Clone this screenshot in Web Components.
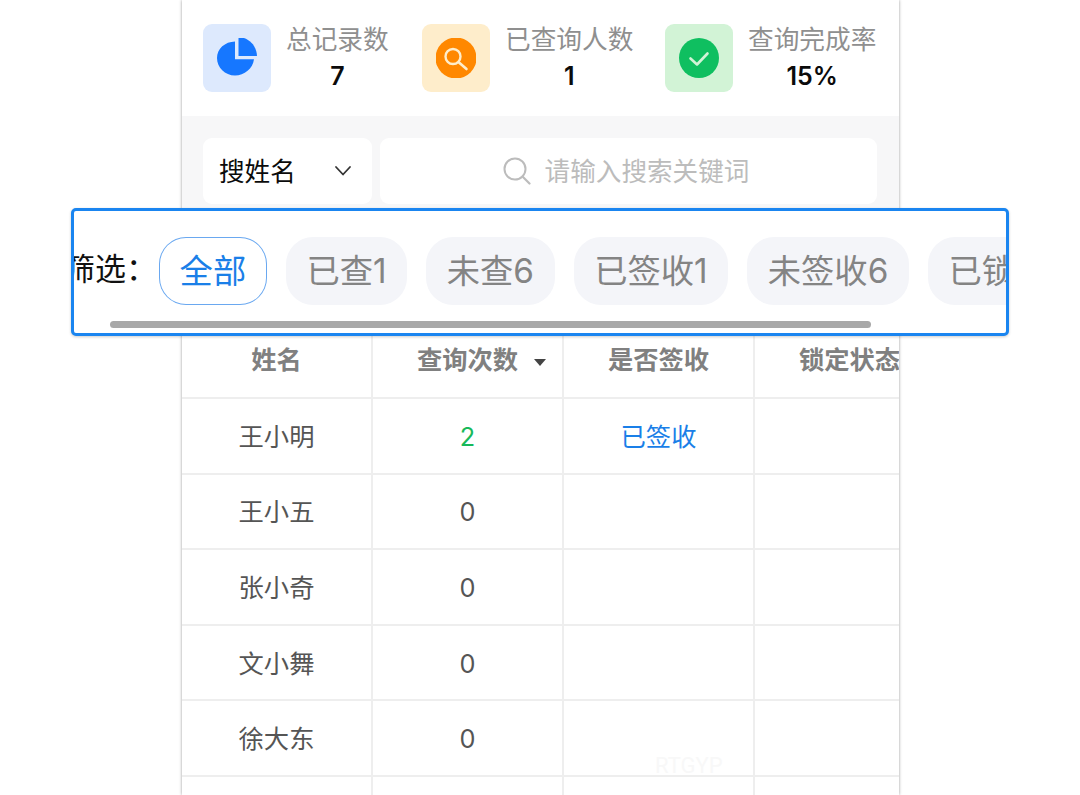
<!DOCTYPE html>
<html lang="zh">
<head>
<meta charset="utf-8">
<title>查询统计</title>
<style>
  html, body { margin:0; padding:0; height:795px; overflow:hidden; background:#fff; }
  body { font-family:"Noto Sans CJK SC","Noto Sans",sans-serif; position:relative; }
</style>
</head>
<body>
<app-shell>
  <stat-bar slot="stats">
    <stat-card label="总记录数" value="7" tone="#dde9fd" style="width:219px">
      <svg viewBox="0 1 40 40" width="40" height="40"><path d="M18 4.5V22.3H37C36 31.5 27.3 38.5 18 38.5 8 38.5 0 30.5 0 21 0 11.8 8 4.7 18 4.5Z" fill="#1677ff"/><path d="M21.5 0C31.6.4 39.6 8.4 40 19H21.5Z" fill="#1677ff"/></svg>
    </stat-card>
    <stat-card label="已查询人数" value="1" tone="#feedcb" style="width:243px">
      <svg viewBox="0 0 40 40" width="40" height="40"><circle cx="20" cy="20" r="20.5" fill="#ff8800"/><circle cx="17" cy="18.5" r="7.5" fill="none" stroke="#feedcb" stroke-width="2.4"/><path d="M23 24.5l7.5 6.5" fill="none" stroke="#feedcb" stroke-width="2.6" stroke-linecap="round"/></svg>
    </stat-card>
    <stat-card label="查询完成率" value="15%" tone="#d2f3d6" style="width:212px">
      <svg viewBox="0 0 40 40" width="40" height="40"><circle cx="20" cy="20" r="20" fill="#0fbf60"/><path d="M11.5 20.5L18 26.5 28.5 15.5" fill="none" stroke="#d2f3d6" stroke-width="2.6" stroke-linecap="round" stroke-linejoin="round"/></svg>
    </stat-card>
  </stat-bar>
  <search-bar slot="search"></search-bar>
  <data-table slot="table"></data-table>
</app-shell>
<filter-overlay>
  <filter-pill active>全部</filter-pill>
  <filter-pill>已查1</filter-pill>
  <filter-pill>未查6</filter-pill>
  <filter-pill>已签收1</filter-pill>
  <filter-pill>未签收6</filter-pill>
  <filter-pill>已锁定1</filter-pill>
</filter-overlay>

<script>
const FONT = `"Noto Sans CJK SC","Noto Sans",sans-serif`;

class AppShell extends HTMLElement {
  connectedCallback() {
    this.attachShadow({mode:'open'}).innerHTML = `
      <style>
        :host {
          display:flex; flex-direction:column;
          width:717px; height:795px; margin-left:182px;
          background:#fff; overflow:hidden;
          box-shadow:0 0 3px rgba(0,0,0,.4);
          position:relative;
        }
      </style>
      <slot name="stats"></slot>
      <slot name="search"></slot>
      <slot name="table"></slot>
      <span style="position:absolute;left:473px;top:753px;font:22px Roboto,sans-serif;color:#f8f8f8">RTGYP</span>
    `;
  }
}

class StatBar extends HTMLElement {
  connectedCallback() {
    this.attachShadow({mode:'open'}).innerHTML = `
      <style>
        :host { display:flex; flex:none; height:116px; padding:24px 0 0 21px; box-sizing:border-box; background:#fff; }
      </style>
      <slot></slot>
    `;
  }
}

class StatCard extends HTMLElement {
  connectedCallback() {
    this.attachShadow({mode:'open'}).innerHTML = `
      <style>
        :host { display:flex; gap:15px; height:68px; flex:none; }
        .icon { width:68px; height:68px; border-radius:9px; background:${this.getAttribute('tone')};
          display:flex; align-items:center; justify-content:center; flex:none; }
        .text { display:flex; flex-direction:column; align-items:center; margin-top:-1px; }
        .label { font:25.7px/30px ${FONT}; color:#8f8f8f; white-space:nowrap; }
        .value { font:600 25px/30px Inter,sans-serif; color:#0b0b0b; margin-top:8px; }
      </style>
      <div class="icon"><slot></slot></div>
      <div class="text">
        <div class="label">${this.getAttribute('label')}</div>
        <div class="value">${this.getAttribute('value')}</div>
      </div>
    `;
  }
}

class SearchBar extends HTMLElement {
  connectedCallback() {
    this.attachShadow({mode:'open'}).innerHTML = `
      <style>
        :host { display:flex; flex:none; gap:8px; height:207.4px; box-sizing:border-box; padding:22px 22px 0 21px; background:#f7f7f8; }
        .box { height:66px; background:#fff; border-radius:9px; display:flex; align-items:center; font:25.6px/30px ${FONT}; box-sizing:border-box; }
        .select { width:169px; padding:0 20px 2px 16px; color:#0b0b0b; justify-content:space-between; }
        .select svg { margin-top:2px; }
        .input { flex:1; color:#bcbcbc; justify-content:center; gap:14px; padding:0 5px 3px 0; }
        .input svg { margin-top:3px; }
      </style>
      <div class="box select">搜姓名
        <svg width="18" height="12" viewBox="0 0 18 12"><path d="M2 2l7 7.5L16 2" fill="none" stroke="#333" stroke-width="1.8" stroke-linecap="round" stroke-linejoin="round"/></svg>
      </div>
      <div class="box input">
        <svg width="28" height="28" viewBox="0 0 28 28"><circle cx="12" cy="12" r="10.5" fill="none" stroke="#bcbcbc" stroke-width="2"/><path d="M19.5 19.5l7 7" stroke="#bcbcbc" stroke-width="2.2" stroke-linecap="round"/></svg>
        请输入搜索关键词
      </div>
    `;
  }
}

class DataTable extends HTMLElement {
  connectedCallback() {
    const head = ['姓名','查询次数','是否签收','锁定状态'];
    const rows = [
      ['王小明','<span class="ok">2</span>','<span class="link">已签收</span>',''],
      ['王小五','0','',''],
      ['张小奇','0','',''],
      ['文小舞','0','',''],
      ['徐大东','0','',''],
      ['','','','']
    ];
    this.attachShadow({mode:'open'}).innerHTML = `
      <style>
        :host { display:grid; flex:none; grid-template-columns:repeat(4,191px); grid-auto-rows:75.6px; background:#fff; }
        .cell { box-sizing:border-box; border-right:2px solid #eee; border-bottom:2px solid #eee;
          display:flex; align-items:center; justify-content:center; white-space:nowrap; padding-top:2px;
          font:25.3px/30px Inter,${FONT}; color:#555; position:relative; }
        .th { font-weight:700; color:#808080; padding-top:0; }
        .sort { position:absolute; right:16.5px; top:35.5px; width:0; height:0; border:6.5px solid transparent; border-top:7px solid #444; border-bottom:0; }
        .ok { color:#18b95a; }
        .link { color:#1a7fe8; }
      </style>
      ${head.map((h, i) => `<div class="cell th">${h}${i === 1 ? '<i class="sort"></i>' : ''}</div>`).join('')}
      ${rows.map(r => r.map(c => `<div class="cell">${c}</div>`).join('')).join('')}
    `;
  }
}

class FilterOverlay extends HTMLElement {
  connectedCallback() {
    this.attachShadow({mode:'open'}).innerHTML = `
      <style>
        :host { display:block; position:absolute; left:71px; top:208px; width:938px; height:128px;
          box-sizing:border-box; border:3px solid #1a85f0; border-radius:5px; background:#fff;
          overflow:hidden; box-shadow:0 1px 3px rgba(0,0,0,.2); }
        .track { display:flex; align-items:flex-start; gap:19px; margin:26px 0 0 -10px; width:max-content; }
        .label { font:31px/60px ${FONT}; color:#111; margin-right:-17px; white-space:nowrap; }
        .thumb { position:absolute; left:36px; top:110px; width:761px; height:7px; border-radius:4px; background:#a8a8a8; }
      </style>
      <div class="track">
        <span class="label">筛选：</span>
        <slot></slot>
      </div>
      <div class="thumb"></div>
    `;
  }
}

class FilterPill extends HTMLElement {
  connectedCallback() {
    this.attachShadow({mode:'open'}).innerHTML = `
      <style>
        :host { display:flex; align-items:center; height:68px; padding:0 20.6px; box-sizing:border-box;
          border-radius:27px; background:#f4f5f9; color:#848484; white-space:nowrap; flex:none;
          font:33.3px/40px Inter,${FONT}; }
        :host([active]) { background:#fff; color:#1a7fe8; box-shadow:inset 0 0 0 1px #6aa8f0; }
      </style>
      <slot></slot>
    `;
  }
}

customElements.define('app-shell', AppShell);
customElements.define('stat-bar', StatBar);
customElements.define('stat-card', StatCard);
customElements.define('search-bar', SearchBar);
customElements.define('data-table', DataTable);
customElements.define('filter-overlay', FilterOverlay);
customElements.define('filter-pill', FilterPill);
</script>
</body>
</html>
